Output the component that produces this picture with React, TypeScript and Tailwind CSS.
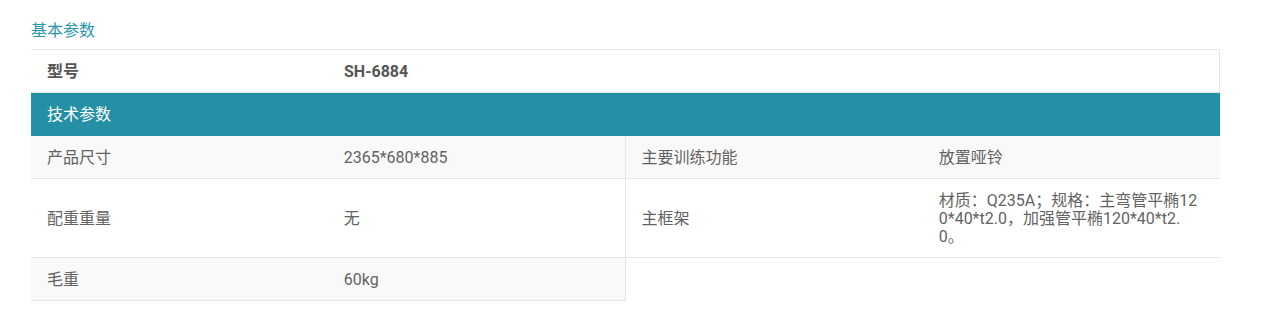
import React from "react";

type Spec = { label: string; value: string };

// Technical specs are laid out two per row
const specs: Spec[] = [
  { label: "产品尺寸", value: "2365*680*885" },
  { label: "主要训练功能", value: "放置哑铃" },
  { label: "配重重量", value: "无" },
  { label: "主框架", value: "材质：Q235A；规格：主弯管平椭120*40*t2.0，加强管平椭120*40*t2.0。" },
  { label: "毛重", value: "60kg" },
];

function SpecCell({ spec, index }: { spec: Spec; index: number }) {
  const row = Math.floor(index / 2);
  const isLeft = index % 2 === 0;
  return (
    <div
      className={`grid grid-cols-2 border-b border-[#e5e5e5] ${isLeft ? "border-r" : ""} ${
        row % 2 === 0 ? "bg-[#f9f9f9]" : "bg-white"
      }`}
    >
      <div className="flex items-center px-4 pt-[13px] pb-[11px] leading-[18px]">{spec.label}</div>
      <div className="flex items-center px-4 pt-[13px] pb-[11px] leading-[18px] break-all">{spec.value}</div>
    </div>
  );
}

export default function App() {
  return (
    <div
      className="w-[1272px] h-[318px] bg-white pl-[31px] pt-[21px] text-[16px] text-[#636363]"
      style={{ fontFamily: 'Roboto, "Noto Sans CJK SC", sans-serif' }}
    >
      <div className="h-[28px] leading-[20px] text-[#2996ac]">基本参数</div>

      <div className="w-[1189px]">
        {/* Basic info */}
        <div className="grid grid-cols-4 h-[44px] border-t border-r border-b border-[#e5e5e5] font-bold text-[#555555]">
          <div className="flex items-center px-4 pt-px">型号</div>
          <div className="flex items-center px-4 pt-px col-span-3">SH-6884</div>
        </div>

        {/* Technical section header */}
        <div className="flex items-center h-[43px] px-4 pt-px bg-[#258fa5] text-white">技术参数</div>

        <div className="grid grid-cols-2">
          {specs.map((s, i) => (
            <SpecCell key={s.label} spec={s} index={i} />
          ))}
        </div>
      </div>
    </div>
  );
}
